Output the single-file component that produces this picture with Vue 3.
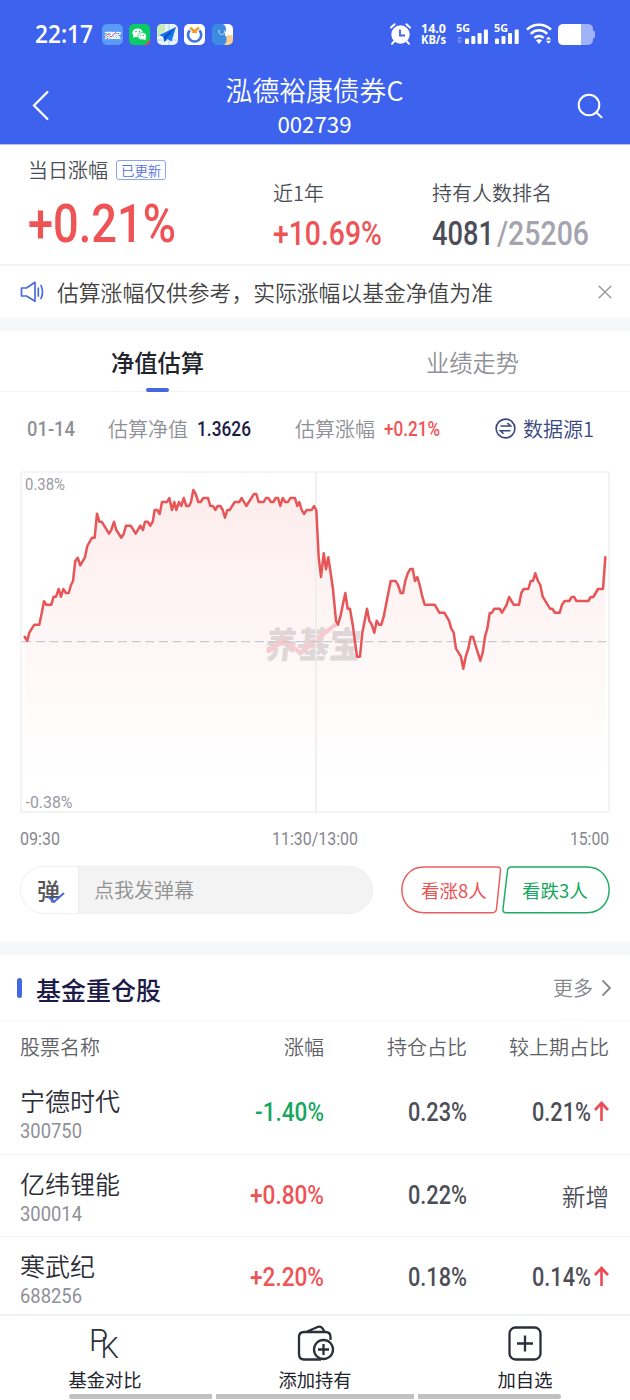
<script setup>
import { h } from 'vue';

// number squeezed to a given width, the box is as high as its digits
const Num = (props) => {
  const height = props.size * 0.711;
  return h('svg', { class: 'num', width: props.w, height }, [
    h('text', { x: 0, y: height, 'font-size': props.size, textLength: props.w, lengthAdjust: 'spacingAndGlyphs' }, props.t)
  ]);
};
Num.props = ['t', 'w', 'size'];

const stocks = [
  { name: '宁德时代', code: '300750', change: '-1.40%', changeWidth: 69, share: '0.23%', diff: '0.21%' },
  { name: '亿纬锂能', code: '300014', change: '+0.80%', changeWidth: 74, share: '0.22%', diff: null },
  { name: '寒武纪', code: '688256', change: '+2.20%', changeWidth: 74, share: '0.18%', diff: '0.14%' },
];

const points = [
  [4.7,165.7],[7.3,169.7],[9.3,161.7],[14.3,153.7],[19.3,153.7],[21.7,142.3],[24,130.3],[26.3,133.7],[31.3,133.7],[33.7,125.7],
  [36,125.7],[38.7,118],[41,125.7],[43.3,118],[46,122],[48.7,122],[51,114],[53,110],[55.3,90],[57.7,86.7],
  [60.3,94.3],[65,86.3],[67.3,75],[72,66.7],[74.7,66.7],[77,42.7],[79.3,50.7],[81.7,50.7],[89,62.7],[91.3,59],
  [94,50.7],[96.3,59],[101.3,66.7],[103.7,63],[106,54.7],[110.7,54.7],[115.7,62.7],[120.3,54.7],[123,59],[125,50.7],
  [127.7,50.7],[130.3,54.7],[132.7,50.7],[134.7,39],[137.3,39],[139.7,43],[142,31],[147,31],[149.3,27],[152,39],
  [154.3,31],[156.3,39],[159,31],[161.3,35],[163.7,27],[166.3,35],[169,35],[171,31],[173.3,19],[175.7,23],
  [178.3,31],[180.7,31],[183.3,27],[188,27],[190.3,35],[193,35],[195.3,39],[197.7,35],[200.3,35],[202.7,39],
  [205,46.7],[207.3,39],[209.7,39],[214.7,31],[219.3,31],[221.7,27],[226.3,35],[234,23],[236.3,23],[238.7,31],
  [243.7,31],[246,27],[248.3,27],[251,31],[253.3,31],[255.7,27],[258,27],[260.3,35],[262.7,27],[265.3,31],
  [268,31],[270.3,27],[275,27],[277.3,35],[279.3,31],[281.7,39],[284,43],[286.7,39],[291.7,39],[294,35],
  [296.3,39],[298.7,86.3],[301,106],[303.7,82.3],[306,98.3],[308.3,86.3],[310.7,102.3],[313,118.3],[316,149.7],[318,153.7],
  [320.3,145.7],[325.3,122],[327.7,137.7],[330,137.7],[332.7,153.7],[337,185.7],[340,185.7],[342.3,161.7],[344.7,149.7],[347,137.7],
  [349.3,149.7],[351.7,153.7],[354.3,161.7],[356.7,149.7],[359,153.7],[361.3,153.7],[363.7,145.7],[368.3,122],[370.7,110],[375.7,110],
  [378,114],[380.7,122],[383,122],[385.3,110],[387.7,102.3],[390.3,98],[392.7,98],[395,110],[397.3,106],[399.7,114],
  [402.3,125.7],[404.7,133.7],[414.7,133.7],[419.3,141.7],[424.3,141.7],[429,149.7],[431.3,157.7],[433.7,161.7],[436,177.7],[441,185.7],
  [443.3,197.7],[445.7,185.7],[448.3,177.7],[450.7,165.7],[453,165.7],[455.3,173.7],[460.3,189.7],[462.7,181.7],[465,165.7],[467.3,157.7],
  [469.7,142.3],[472,141.7],[474.3,137.7],[479.7,137.7],[482,141.7],[486.7,133.7],[489,126],[493.7,133.7],[499,133.7],[501.3,122],
  [503.7,118],[508.3,118],[510.7,110],[513,110],[515.3,102.3],[518,110],[520.3,114],[522.7,125.7],[530,137.7],[532.3,137.7],
  [535,141.7],[539.7,141.7],[542,133.7],[544.7,130],[549.3,130],[551.7,126],[554.3,126],[556.3,130],[568.3,130],[570.7,126],
  [573.3,126],[578,118],[583,118],[585.3,86.3],
];
const line = points.map((p) => p.join(',')).join(' ');
const area = `4.7,340 ${line} 585.3,340`;
</script>

<template>
  <div class="page">
    <header class="header">
      <div class="status">
        <Num class="clock" t="22:17" :w="58" :size="25" />
        <div class="apps">
          <svg width="21" height="21" viewBox="0 0 21 21">
            <rect width="21" height="21" rx="5" fill="#5a9bf5" />
            <text x="2" y="13.5" font-size="7" font-weight="900" fill="#fff" textLength="17">养基宝</text>
            <path d="M2 13l4-3 3 3 5-5" stroke="#e8506a" stroke-width="1" fill="none" />
          </svg>
          <svg width="21" height="21" viewBox="0 0 21 21">
            <rect width="21" height="21" rx="5" fill="#0bcc62" />
            <path d="M15.5 21L21 15.5V17a4 4 0 0 1-4 4z" fill="#d9503f" />
            <ellipse cx="8.6" cy="8.8" rx="5.2" ry="4.4" fill="#fff" />
            <path d="M4.6 11l-.4 3 3-1.4z" fill="#fff" />
            <ellipse cx="13.2" cy="12.2" rx="4.2" ry="3.6" fill="#fff" stroke="#0bcc62" stroke-width=".7" />
            <path d="M14 15l2.8 1.3-.4-2.6z" fill="#fff" />
            <g fill="#0bcc62"><circle cx="7" cy="7.6" r=".8" /><circle cx="10.5" cy="7.6" r=".8" /><circle cx="11.8" cy="11.4" r=".6" /><circle cx="14.6" cy="11.4" r=".6" /></g>
          </svg>
          <svg width="21" height="21" viewBox="0 0 21 21">
            <rect width="21" height="21" rx="5" fill="#e9f3fd" />
            <path d="M5 0h3v7l-8 6V5a5 5 0 0 1 5-5z" fill="#c9ecb4" />
            <path d="M12 0v21M0 16h21" stroke="#cfe4fb" stroke-width="2" />
            <path d="M19 3L2 11.2l4.4 1.6L7.5 18l3-3 4 2.6z" fill="#1574ee" />
            <path d="M19 3L6.4 12.8 7.5 18l1.8-4z" fill="#0b4fbe" />
          </svg>
          <svg width="21" height="21" viewBox="0 0 21 21">
            <rect width="21" height="21" rx="5" fill="#fff" />
            <path d="M5.8 6.4a6.6 6.6 0 1 0 9.6 0" fill="none" stroke="#3f74d8" stroke-width="2.6" />
            <path d="M6.2 3.6l4.4 4 4.4-4" fill="none" stroke="#f39a1e" stroke-width="2.6" />
            <path d="M8.2 8.3h4.8" stroke="#f39a1e" stroke-width="1.4" />
          </svg>
          <svg width="21" height="21" viewBox="0 0 21 21">
            <rect width="21" height="21" rx="5" fill="#3d8ae2" />
            <path d="M11 0h5a5 5 0 0 1 5 5v7h-8V9c2-4 1-7-2-9z" fill="#fff" />
            <path d="M14 12c3-1.5 5-1.2 7-.6V16a5 5 0 0 1-5 5h-4c2.6-2 3.2-5 2-9z" fill="#f8cf91" />
            <path d="M7 6c-.5 3 1 5 3.2 4.5S13 8 12.5 6.5" fill="none" stroke="#d5e6fb" stroke-width="1" />
          </svg>
        </div>
        <div class="signals">
          <svg width="23" height="22" viewBox="0 0 23 22">
            <circle cx="11.5" cy="11.5" r="9.2" fill="#fff" />
            <path d="M2 4.5L5.6 1.2M21 4.5L17.4 1.2M5 18.5l-2 2.3M18 18.5l2 2.3" stroke="#fff" stroke-width="2" stroke-linecap="round" />
            <path d="M11 6.5v6h5" fill="none" stroke="#3d63ee" stroke-width="1.8" />
          </svg>
          <div class="speed">
            <Num t="14.0" :w="25" :size="12.8" />
            <Num t="KB/s" :w="25" :size="11.5" />
          </div>
          <svg class="cell" width="33" height="22" viewBox="0 0 33 22" fill="#fff">
            <text x="0" y="8.5" font-size="11" font-weight="700" textLength="14" lengthAdjust="spacingAndGlyphs">5G</text>
            <path d="M3.5 13l2.6 3.2H.9zM3.5 20.7l2.6-3.2H.9z" opacity=".3" />
            <rect x="9" y="15.5" width="4" height="5.5" rx="1" /><rect x="15.3" y="13" width="4" height="8" rx="1" />
            <rect x="21.6" y="10" width="4" height="11" rx="1" /><rect x="27.9" y="6.5" width="4" height="14.5" rx="1" />
          </svg>
          <svg class="cell2" width="26" height="22" viewBox="0 0 26 22" fill="#fff">
            <text x="0" y="8.5" font-size="11" font-weight="700" textLength="14" lengthAdjust="spacingAndGlyphs">5G</text>
            <rect x="1" y="15.5" width="4" height="5.5" rx="1" /><rect x="7.5" y="13" width="4" height="8" rx="1" />
            <rect x="14" y="10" width="4" height="11" rx="1" /><rect x="20.7" y="6.5" width="4" height="14.5" rx="1" />
          </svg>
          <svg class="wifi" width="27" height="22" viewBox="0 0 27 22">
            <g fill="none" stroke="#fff" stroke-width="2.5">
              <path d="M1 6.6a17 17 0 0 1 24 0" /><path d="M4.8 10.8a11.5 11.5 0 0 1 16.4 0" /><path d="M8.4 14.8a6.6 6.6 0 0 1 9.2 0" />
            </g>
            <path d="M10 17.6a4.2 4.2 0 0 1 6 0L13 21z" fill="#fff" />
            <path d="M22.5 13.4l2.6 3h-5.2zM22.5 20.8l2.6-3h-5.2z" fill="#fff" />
          </svg>
          <svg width="37" height="21" viewBox="0 0 37 21">
            <path d="M6 0h23q6 0 6 5v1.5q2 0 2 2v4q0 2-2 2V16q0 5-6 5H6q-6 0-6-5.5v-10Q0 0 6 0z" fill="#a1b3f7" />
            <path d="M6 0h17v21H6q-6 0-6-5.5v-10Q0 0 6 0z" fill="#fff" />
          </svg>
        </div>
      </div>
      <div class="titlebar">
        <svg class="back" width="18" height="31" viewBox="0 0 18 31"><path d="M16 1.5L2 15.5l14 14" fill="none" stroke="#fff" stroke-width="2.2" /></svg>
        <div class="title">
          <div class="fundName">泓德裕康债券C</div>
          <div class="fundCode">002739</div>
        </div>
        <svg class="search" width="26" height="26" viewBox="0 0 26 26" fill="none" stroke="#fff" stroke-width="2"><circle cx="12" cy="12" r="10.3" /><path d="M19.5 19.5l5 4.7" stroke-linecap="round" /></svg>
      </div>
    </header>

    <section class="stats">
      <div class="today">
        <div class="label">当日涨幅 <span class="badge">已更新</span></div>
        <Num class="red" t="+0.21%" :w="148" :size="54" />
      </div>
      <div class="year">
        <div class="label">近1年</div>
        <Num class="red" t="+10.69%" :w="109" :size="34" />
      </div>
      <div class="rank">
        <div class="label">持有人数排名</div>
        <div class="rankValue"><Num class="dark" t="4081" :w="62" :size="34" /><Num class="pale" t="/25206" :w="92" :size="34" /></div>
      </div>
    </section>

    <div class="notice">
      <svg width="24" height="22" viewBox="0 0 24 22" fill="none" stroke="#4a6bdc" stroke-width="1.7" stroke-linejoin="round" stroke-linecap="round"><path d="M1.5 7h5L15 1.3v19L6.5 15h-5z" /><path d="M18.3 7v8M21 4.5q3 6.5 0 13" /></svg>
      <span>估算涨幅仅供参考，实际涨幅以基金净值为准</span>
      <svg class="close" width="14" height="14" viewBox="0 0 14 14"><path d="M.7.7l12.6 12.6M13.3.7L.7 13.3" stroke="#999" stroke-width="1.4" /></svg>
    </div>
    <div class="gap"></div>

    <div class="tabs">
      <div class="tab active">净值估算</div>
      <div class="tab">业绩走势</div>
    </div>

    <div class="info">
      <Num class="gray" t="01-14" :w="48" :size="20" />
      <span class="gray infoLabel">估算净值</span>
      <Num class="navy" t="1.3626" :w="54" :size="20" />
      <span class="gray infoLabel second">估算涨幅</span>
      <Num class="red" t="+0.21%" :w="56" :size="20" />
      <div class="source">
        <svg width="21" height="21" viewBox="0 0 21 21" fill="none" stroke="#38477f" stroke-width="1.6"><circle cx="10.5" cy="10.5" r="9.4" /><path d="M5.5 8h10l-3-3M15.500 12.8h-10l3 3" /></svg>
        数据源1
      </div>
    </div>

    <div class="chart">
      <svg width="590" height="342" viewBox="0 0 590 342">
        <defs>
          <linearGradient id="fade" x1="0" y1="19" x2="0" y2="310" gradientUnits="userSpaceOnUse">
            <stop offset="0" stop-color="#f04a4a" stop-opacity=".1" />
            <stop offset="1" stop-color="#f04a4a" stop-opacity="0" />
          </linearGradient>
        </defs>
        <rect x="1" y="1" width="588" height="340" rx="1" fill="#fff" stroke="#f0f1f3" stroke-width="1.6" />
        <g class="watermark">
          <text x="0" y="0" font-size="36" font-weight="900" fill="#dfdddf" transform="translate(244 187) skewX(-6)" textLength="96" lengthAdjust="spacingAndGlyphs">养基宝</text>
          <path d="M247 181l18-12 15 13 20-16 16-13" fill="none" stroke="#f8cfd3" stroke-width="4" />
        </g>
        <polygon :points="area" fill="url(#fade)" />
        <path d="M296 1v340" stroke="#ecedef" stroke-width="1.6" />
        <path d="M2 170.7h586" stroke="#c9c9cb" stroke-width="1.3" stroke-dasharray="9 4.7" />
        <polyline :points="line" fill="none" stroke="#e85557" stroke-width="2.5" stroke-linejoin="round" stroke-linecap="round" />
        <g fill="#999aa1" font-size="17">
          <text x="5" y="18.5" textLength="40" lengthAdjust="spacingAndGlyphs">0.38%</text>
          <text x="5.5" y="337" textLength="47" lengthAdjust="spacingAndGlyphs">-0.38%</text>
        </g>
      </svg>
    </div>
    <div class="axis">
      <Num t="09:30" :w="40" :size="18" />
      <Num t="11:30/13:00" :w="86" :size="18" />
      <Num t="15:00" :w="39" :size="18" />
    </div>

    <div class="danmu">
      <div class="input">
        <div class="toggle">弹<svg width="18" height="12" viewBox="0 0 18 12"><path d="M1 4.5l6 5.5L17 1" fill="none" stroke="#4468df" stroke-width="2" /></svg></div>
        <div class="placeholder">点我发弹幕</div>
      </div>
      <div class="vote up">
        <svg width="101" height="48" viewBox="0 0 101 48"><path d="M23 1h73.5q3.5 0 3 3.5L95.500 43q-.5 3.7-4 3.7H23C-6.5 46.7-6.5 1 23 1z" fill="none" stroke="#e85f61" stroke-width="1.5" /></svg>
        <span>看涨8人</span>
      </div>
      <div class="vote down">
        <svg width="108" height="48" viewBox="0 0 108 48"><path d="M85 1H9.5Q6 1 5.5 4.5L1 43q-.4 3.7 3 3.7h81c29.5 0 29.5-45.7 0-45.7z" fill="none" stroke="#22ab66" stroke-width="1.5" /></svg>
        <span>看跌3人</span>
      </div>
    </div>
    <div class="gap"></div>

    <div class="sectionHead">
      <i></i>
      <h2>基金重仓股</h2>
      <div class="more">更多 <svg width="11" height="18" viewBox="0 0 11 18"><path d="M1.5 1.5L9 9l-7.5 7.5" fill="none" stroke="#85868c" stroke-width="1.8" /></svg></div>
    </div>

    <div class="row tableHead">
      <span>股票名称</span><span>涨幅</span><span>持仓占比</span><span>较上期占比</span>
    </div>
    <div class="row stock" v-for="stock in stocks" :key="stock.code">
      <div class="name">
        <div>{{ stock.name }}</div>
        <Num :t="stock.code" :w="62" :size="19.5" />
      </div>
      <div class="value"><Num :class="stock.change[0] === '-' ? 'green' : 'red'" :t="stock.change" :w="stock.changeWidth" :size="26" /></div>
      <div class="value"><Num :t="stock.share" :w="59" :size="26" /></div>
      <div class="value">
        <template v-if="stock.diff">
          <Num :t="stock.diff" :w="59" :size="26" />
          <svg class="arrow" width="15" height="20" viewBox="0 0 15 20" fill="none" stroke="#ee4a55" stroke-width="2.6"><path d="M7.5 20V2M1 9l6.5-7L14 9" /></svg>
        </template>
        <span v-else class="added">新增</span>
      </div>
    </div>

    <nav class="bottom">
      <div class="item">
        <svg class="pk" width="32" height="36" viewBox="0 0 32 36" fill="#2c2f38">
          <text x="0" y="26" font-size="31">P<tspan x="11.5" y="33" font-size="29">K</tspan></text>
        </svg>
        <span>基金对比</span>
      </div>
      <div class="item">
        <svg width="38" height="36" viewBox="0 0 38 36" fill="none" stroke="#2c2f38" stroke-width="2.3"><path d="M34.5 15v-3q0-5-5-5H8Q3 7 3 12v17q0 5.5 5 5.5h17M10 7l11-4.800q5-2.200 7.500 4.800" /><circle cx="27.500" cy="24.500" r="9.500" /><path d="M27.500 19v11M22 24.500h11" /></svg>
        <span>添加持有</span>
      </div>
      <div class="item">
        <svg width="34" height="36" viewBox="0 0 34 36" fill="none" stroke="#2c2f38" stroke-width="2.3"><rect x="1.500" y="2.500" width="31" height="32" rx="6" /><path d="M17 10.500v16M9 18.500h16" /></svg>
        <span>加自选</span>
      </div>
      <div class="homebar"><i></i><i></i><i></i></div>
    </nav>
  </div>
</template>

<style>
body {
  background: #fff;
}
</style>

<style scoped>
.page {
  width: 630px;
  height: 1400px;
  overflow: hidden;
  background: #fff;
  color: #4c4e57;
  font-family: "Noto Sans CJK SC", sans-serif;
  font-size: 20px;
  font-weight: 350;
  line-height: 28px;
  display: flex;
  flex-direction: column;
}
.page > * {
  flex-shrink: 0;
  box-sizing: border-box;
}
svg {
  display: block;
  flex-shrink: 0;
  overflow: visible;
}
.num {
  fill: currentColor;
  font-family: Roboto, sans-serif;
  font-weight: 500;
}
.red { color: #ee5355; }
.green { color: #18a760; }
.gray { color: #8f9097; }
.dark { color: #4b4d58; }
.pale { color: #a3a4ad; }
.navy { color: #1c1b47; }

.header {
  height: 145px;
  background: #3d63ee;
  color: #fff;
  border-bottom: 1px solid #b5c3f8;
}
.status {
  height: 68px;
  padding: 0 35px 0 35px;
  display: flex;
  align-items: center;
}
.clock, .speed .num {
  font-family: "Open Sans", sans-serif;
  font-weight: 600;
}
.speed .num { font-weight: 700; }
.apps {
  display: flex;
  gap: 6.4px;
  margin-left: 9px;
}
.signals {
  display: flex;
  align-items: center;
  margin-left: auto;
}
.speed {
  display: flex;
  flex-direction: column;
  gap: 3.5px;
  margin: 0 10px 0 9px;
}
.cell text, .cell2 text { font-family: "Open Sans", sans-serif; }
.cell { margin-right: 5px; }
.cell2 { margin-right: 6px; }
.wifi { margin-right: 5px; }
.titlebar {
  display: flex;
  justify-content: space-between;
  padding: 0 27px 0 32px;
}
.back { margin-top: 22px; }
.search { margin-top: 25px; }
.title {
  text-align: center;
  padding-left: 2px;
}
.fundName {
  font-size: 26.8px;
  line-height: 40px;
  margin-top: 2px;
}
.fundCode {
  font-size: 22.3px;
  line-height: 27px;
  font-weight: 400;
}

.stats {
  height: 121px;
  display: flex;
  border-bottom: 2px solid #f1f2f4;
  padding-left: 28px;
}
.today { width: 245px; padding-top: 11px; }
.year { width: 159px; padding-top: 34px; }
.rank { padding-top: 34px; }
.label {
  display: flex;
  align-items: center;
}
.badge {
  margin-left: 8px;
  padding: 0 4px;
  border: 1px solid #8ea5ee;
  border-radius: 3px;
  color: #5371df;
  font-size: 13.4px;
  line-height: 18px;
}
.today .num { margin-top: 20px; }
.year .num, .rankValue { margin-top: 14px; }
.rankValue {
  display: flex;
  gap: 3px;
}

.notice {
  height: 52px;
  padding: 0 18px 0 20px;
  display: flex;
  align-items: center;
  font-size: 21.8px;
  color: #444;
}
.notice span { margin: -1px 0 0 13px; }
.close { margin-left: auto; }
.gap {
  height: 13px;
  background: #f5f7fb;
}

.tabs {
  height: 61px;
  display: flex;
  border-bottom: 1px solid #f3f4f6;
}
.tab {
  flex: 1;
  text-align: center;
  font-size: 23.3px;
  line-height: 62px;
  color: #8f9196;
  position: relative;
}
.active {
  color: #22242c;
  font-weight: 500;
}
.active::after {
  content: '';
  position: absolute;
  left: 50%;
  bottom: -1px;
  width: 23px;
  height: 4px;
  margin-left: -11.5px;
  border-radius: 2px;
  background: #4468df;
}

.info {
  height: 79px;
  padding: 0 36px 5px 27px;
  display: flex;
  align-items: center;
}
.infoLabel { margin: -1px 9px 0 33px; }
.second { margin-left: 44px; }
.source {
  margin: -1px 0 0 auto;
  display: flex;
  align-items: center;
  gap: 7px;
  color: #38477f;
}
.chart { padding-left: 20px; }
.chart text {
  font-family: Roboto, sans-serif;
  font-weight: 400;
}
.chart .watermark text {
  font-family: "Noto Sans CJK SC", sans-serif;
  font-weight: 900;
}
.axis {
  height: 53px;
  padding: 19px 21px 0 20px;
  display: flex;
  justify-content: space-between;
  color: #85868e;
}
.axis .num { font-weight: 400; }

.danmu {
  height: 76px;
  padding: 0 20px;
  display: flex;
}
.input {
  width: 353px;
  height: 48px;
  box-sizing: border-box;
  border: 1px solid #eef0f1;
  border-radius: 24px;
  background: #f3f3f3;
  display: flex;
  overflow: hidden;
  line-height: 46px;
}
.toggle {
  width: 57px;
  background: #fff;
  border-right: 1px solid #ebebeb;
  text-align: center;
  text-indent: -2px;
  font-size: 23px;
  font-weight: 500;
  color: #55565a;
  position: relative;
}
.toggle svg {
  position: absolute;
  left: 26px;
  top: 25px;
}
.placeholder {
  margin-left: 15px;
  color: #8f9091;
}
.vote {
  position: relative;
  height: 48px;
}
.vote span {
  position: absolute;
  top: 0;
  left: 20px;
  font-size: 18.5px;
  font-weight: 400;
  line-height: 48px;
  white-space: nowrap;
}
.up {
  margin-left: 28px;
  color: #e85557;
}
.down { color: #18a760; }

.sectionHead {
  height: 66px;
  padding: 0 18px 0 17px;
  display: flex;
  align-items: center;
  border-bottom: 1px solid #f8f8f9;
}
.sectionHead i {
  width: 5px;
  height: 20px;
  border-radius: 3px;
  background: #4468df;
}
h2 {
  margin: 2px 0 0 14px;
  font-size: 25px;
  font-weight: 500;
  color: #1c1b47;
}
.more {
  margin-left: auto;
  display: flex;
  align-items: center;
  gap: 8px;
  color: #85868c;
}
.row {
  display: grid;
  grid-template-columns: 150px 154px 143px 142px;
  padding: 0 21px 0 20px;
}
.tableHead {
  height: 51px;
  line-height: 51px;
  color: #606168;
}
.tableHead span:not(:first-child) { text-align: right; }
.stock {
  height: 82.5px;
  border-bottom: 1px solid #f4f5f6;
}
.name {
  font-size: 25px;
  line-height: 36px;
  padding-top: 10px;
  color: #2c2e38;
}
.name .num {
  margin-top: 6px;
  color: #8f9097;
  font-weight: 400;
}
.value {
  display: flex;
  justify-content: flex-end;
  align-items: center;
  padding-bottom: 3px;
}
.arrow { margin-left: 3px; }
.added {
  font-size: 23.5px;
  padding-top: 5px;
}

.bottom {
  height: 86px;
  margin-top: -5.5px;
  background: #fff;
  border-top: 2px solid #f1f2f3;
  display: flex;
  position: relative;
}
.item {
  flex: 1;
  display: flex;
  flex-direction: column;
  align-items: center;
  padding-top: 9px;
  font-size: 18.3px;
  font-weight: 400;
  line-height: 26px;
  color: #22242c;
}
.item span { margin-top: 5px; }
.pk text {
  font-family: Roboto, sans-serif;
  font-weight: 300;
}
.homebar {
  position: absolute;
  left: 69px;
  bottom: 1px;
  display: flex;
  gap: 4px;
}
.homebar i {
  width: 143px;
  height: 5px;
  background: #c1c1c1;
}
.homebar i:nth-child(2) { width: 198px; }
.homebar i:first-child { border-radius: 3px 0 0 3px; }
.homebar i:last-child { border-radius: 0 3px 3px 0; }
</style>
